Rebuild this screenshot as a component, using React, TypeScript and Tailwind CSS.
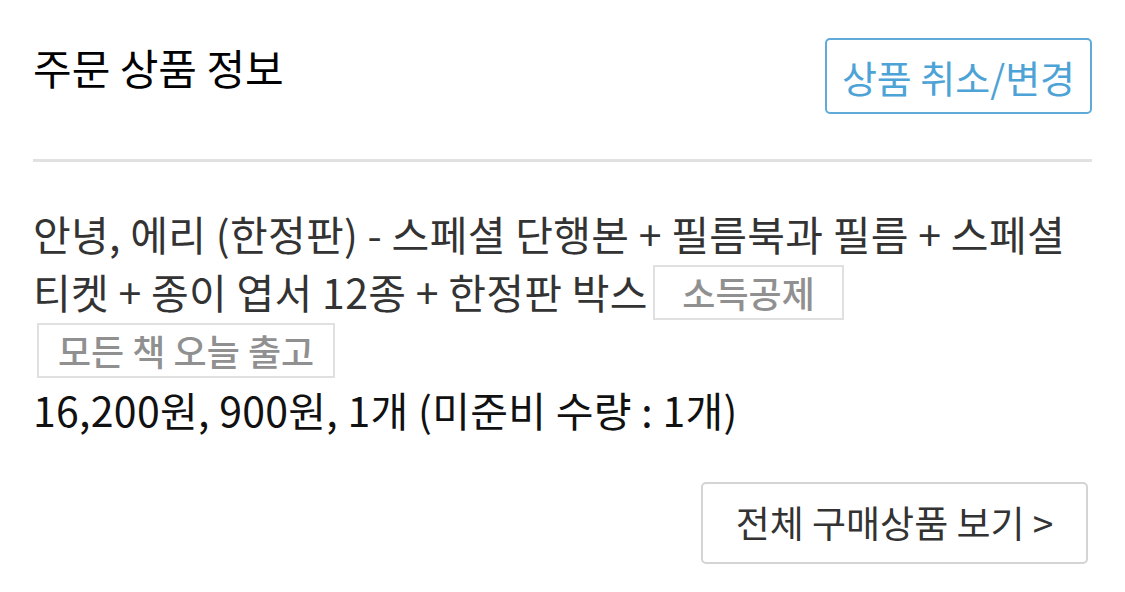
const font = { fontFamily: '"Noto Sans CJK KR", "Noto Sans", sans-serif' };

const Badge = ({ label, className = "" }: { label: string; className?: string }) => (
  <span
    className={`inline-block align-top mt-[3px] h-[55px] leading-[51px] border-2 border-[#e0e0e0] text-[36px] font-medium text-[#909090] tracking-normal ${className}`}
  >
    {label}
  </span>
);

const App = () => {
  return (
    <div className="w-full min-h-screen bg-white px-[33px] pt-[38px] text-[#333333]" style={font}>
      <div className="flex justify-between items-start">
        <h2 className="text-[42px] leading-[58px] text-black">주문 상품 정보</h2>
        <button className="h-[76px] w-[267px] border-2 border-[#5faad9] rounded-[5px] text-[38px] text-[#4ea3d6]">
          상품 취소/변경
        </button>
      </div>

      <div className="mt-[45px] h-[3px] bg-[#e1e1e1]" />

      <p className="mt-[42px] text-[41px] leading-[58px] tracking-[0.3px]">
        안녕, 에리 (한정판) - 스페셜 단행본 + 필름북과 필름 + 스페셜
        <br />
        티켓 + 종이 엽서 12종 + 한정판 박스 <Badge label="소득공제" className="ml-[-4px] px-[27px]" />{" "}
        <Badge label="모든 책 오늘 출고" className="ml-[4px] px-[19px]" />
      </p>
      <p className="mt-[2px] text-[41px] leading-[58px] tracking-[0.3px] text-[#111111]">
        16,200원, 900원, 1개 (미준비 수량 : 1개)
      </p>

      <div className="mt-[44px] flex justify-end pr-[4px]">
        <button className="h-[82px] w-[387px] border-2 border-[#d4d4d4] rounded-[5px] text-[37px] text-[#333333]">
          전체 구매상품 보기 &gt;
        </button>
      </div>
    </div>
  );
};

export default App;
